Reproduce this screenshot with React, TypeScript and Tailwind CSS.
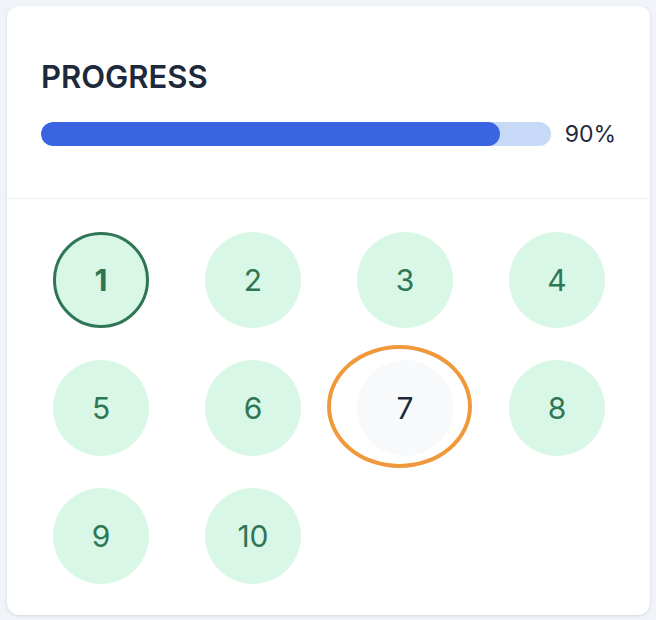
const items = [1, 2, 3, 4, 5, 6, 7, 8, 9, 10];

function Bubble({ n }: { n: number }) {
  if (n === 1) {
    return (
      <div className="w-24 h-24 rounded-full bg-[#d9f7e6] border-[3.5px] border-[#2f7657] flex items-center justify-center text-[30px] font-bold text-[#2f7657]">
        {n}
      </div>
    );
  }
  if (n === 7) {
    return (
      <div className="relative w-24 h-24">
        <div className="w-24 h-24 rounded-full bg-[#f7f9fb] flex items-center justify-center text-[30px] text-[#1e293b]">
          {n}
        </div>
        <div className="absolute left-[-30px] top-[-15px] w-[145px] h-[123px] rounded-[50%] border-4 border-[#f0993a]" />
      </div>
    );
  }
  return (
    <div className="w-24 h-24 rounded-full bg-[#d9f7e6] flex items-center justify-center text-[30px] text-[#2f7657]">
      {n}
    </div>
  );
}

export default function App() {
  const pct = 90;
  return (
    <div className="min-h-[620px] bg-[#f0f3f8] pt-[6px] pl-[7px]" style={{ fontFamily: 'Inter, "Liberation Sans", sans-serif' }}>
      <div className="w-[643px] bg-white rounded-xl shadow-[0_1px_3px_rgba(15,23,42,0.12)]">
        <div className="pl-[34px] pr-[34px] pt-[51px] pb-[52px] border-b border-[#eef2f6]">
          <h2 className="text-[31px] leading-[40px] font-semibold text-[#1e293b]">PROGRESS</h2>
          <div className="mt-[25px] flex items-center gap-[14px]">
            <div className="flex-1 h-6 rounded-full bg-[#c6daf7] overflow-hidden">
              <div className="h-full rounded-full bg-[#3a64e2]" style={{ width: `${pct}%` }} />
            </div>
            <span className="text-[23px] leading-6 text-[#1e293b]">{pct}%</span>
          </div>
        </div>
        <div className="px-[46px] pt-[33px] pb-[31px] grid grid-cols-[repeat(4,96px)] gap-x-[56px] gap-y-[32px]">
          {items.map(n => (
            <Bubble key={n} n={n} />
          ))}
        </div>
      </div>
    </div>
  );
}
